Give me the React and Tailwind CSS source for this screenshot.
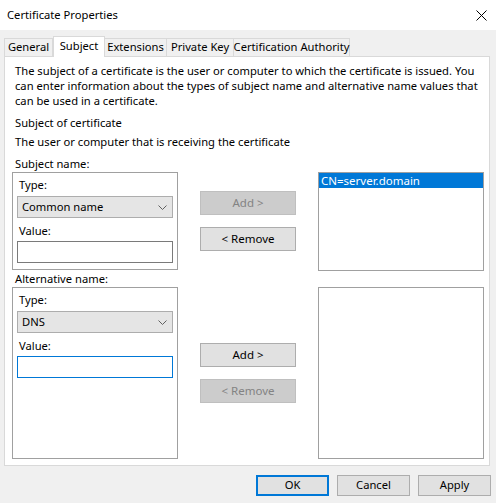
import React from "react";

const font = { fontFamily: '"Noto Sans", "Open Sans", sans-serif' };

function Chevron() {
  return (
    <svg width="9" height="5" viewBox="0 0 9 5" className="shrink-0">
      <path d="M0.5 0.5 L4.5 4.5 L8.5 0.5" fill="none" stroke="#606060" strokeWidth="1" />
    </svg>
  );
}

function Select({ value }) {
  return (
    <div className="flex h-[22px] w-[156px] items-center justify-between border border-[#adadad] bg-[#e5e5e5] pl-[4px] pr-[5px]">
      <span>{value}</span>
      <Chevron />
    </div>
  );
}

function Btn({ children, disabled, className = "" }) {
  return (
    <div
      className={
        "flex h-[24px] w-[96px] items-center justify-center border text-[11.5px] " +
        (disabled
          ? "border-[#bfbfbf] bg-[#cccccc] text-[#838383] "
          : "border-[#adadad] bg-[#e1e1e1] text-black ") +
        className
      }
    >
      {children}
    </div>
  );
}

function NameGroup({ type, focused, height }) {
  return (
    <div className={"ml-[-3px] flex w-[166px] flex-col border border-[#a0a0a0] px-[4px] " + height}>
      <div className="mt-[4px] h-[15px] pl-[2px] leading-[15px]">Type:</div>
      <div className="mt-[4px]">
        <Select value={type} />
      </div>
      <div className="mt-[5px] h-[15px] pl-[2px] leading-[15px]">Value:</div>
      <div
        className={
          "mt-[3px] h-[22px] w-[156px] bg-white border " +
          (focused ? "border-[#0078d7]" : "border-[#7a7a7a]")
        }
      />
    </div>
  );
}

function Tab({ children, w, first }) {
  return (
    <div
      className={
        "flex h-[18px] items-center justify-center whitespace-nowrap border border-b-0 border-[#d9d9d9] bg-[#f0f0f0] " +
        (first ? "" : "border-l-0 ") +
        w
      }
    >
      {children}
    </div>
  );
}

export default function App() {
  return (
    <div
      className="flex h-[503px] w-[496px] flex-col bg-[#f0f0f0] text-[11.2px] text-black"
      style={font}
    >
      {/* Title bar */}
      <div className="flex h-[30px] shrink-0 items-center justify-between bg-white pl-[7px] pr-[8px]">
        <span className="text-[11.2px]">Certificate Properties</span>
        <svg width="11" height="11" viewBox="0 0 11 11" className="mr-[1px]">
          <path d="M0.5 0.5 L10.5 10.5 M10.5 0.5 L0.5 10.5" stroke="#000" strokeWidth="1" fill="none" />
        </svg>
      </div>

      {/* Tabs */}
      <div className="ml-[4px] mt-[6px] flex h-[20px] items-end">
        <Tab w="w-[49px]" first>General</Tab>
        <div className="relative z-10 mb-[-1px] flex h-[21px] w-[52px] items-start justify-center whitespace-nowrap border border-b-0 border-[#d9d9d9] bg-white pt-[1px]">
          Subject
        </div>
        <Tab w="w-[62px]">Extensions</Tab>
        <Tab w="w-[67px]">Private Key</Tab>
        <Tab w="w-[116px]">Certification Authority</Tab>
      </div>

      {/* Panel */}
      <div className="ml-[4px] flex h-[410px] w-[486px] flex-col border border-[#d9d9d9] bg-white pl-[10px] pr-[5px] pt-[6px]">
        <div className="whitespace-nowrap leading-[15px]">
          <div>The subject of a certificate is the user or computer to which the certificate is issued. You</div>
          <div>can enter information about the types of subject name and alternative name values that</div>
          <div>can be used in a certificate.</div>
        </div>
        <div className="mt-[7px] leading-[15px]">Subject of certificate</div>
        <div className="mt-[4px] leading-[15px]">The user or computer that is receiving the certificate</div>
        <div className="mt-[7px] h-[15px] leading-[15px]">Subject name:</div>

        <div className="mt-[1px] flex">
          <NameGroup type="Common name" height="h-[98px]" />
          <div className="ml-[22px] flex flex-col">
            <Btn disabled className="mt-[19px]">Add &gt;</Btn>
            <Btn className="mt-[12px]">&lt; Remove</Btn>
          </div>
          <div className="ml-[22px] h-[99px] w-[166px] border border-[#a0a0a0] bg-white">
            <div className="h-[15px] bg-[#0078d7] pl-[2px] text-[11.5px] leading-[15px] text-white">CN=server.domain</div>
          </div>
        </div>

        <div className="h-[15px] leading-[15px]">Alternative name:</div>
        <div className="mt-[1px] flex">
          <NameGroup type="DNS" focused height="h-[172px]" />
          <div className="ml-[22px] flex flex-col">
            <Btn className="mt-[56px]">Add &gt;</Btn>
            <Btn disabled className="mt-[12px]">&lt; Remove</Btn>
          </div>
          <div className="ml-[22px] h-[172px] w-[166px] border border-[#a0a0a0] bg-white" />
        </div>
      </div>

      {/* Bottom buttons */}
      <div className="mt-[9px] flex justify-end gap-[8px] pr-[5px]">
        <div className="flex h-[21px] w-[73px] items-center justify-center border-2 border-[#0078d7] bg-[#e1e1e1]">
          OK
        </div>
        <div className="flex h-[21px] w-[73px] items-center justify-center border border-[#adadad] bg-[#e1e1e1]">
          Cancel
        </div>
        <div className="flex h-[21px] w-[73px] items-center justify-center border border-[#adadad] bg-[#e1e1e1]">
          Apply
        </div>
      </div>
    </div>
  );
}
